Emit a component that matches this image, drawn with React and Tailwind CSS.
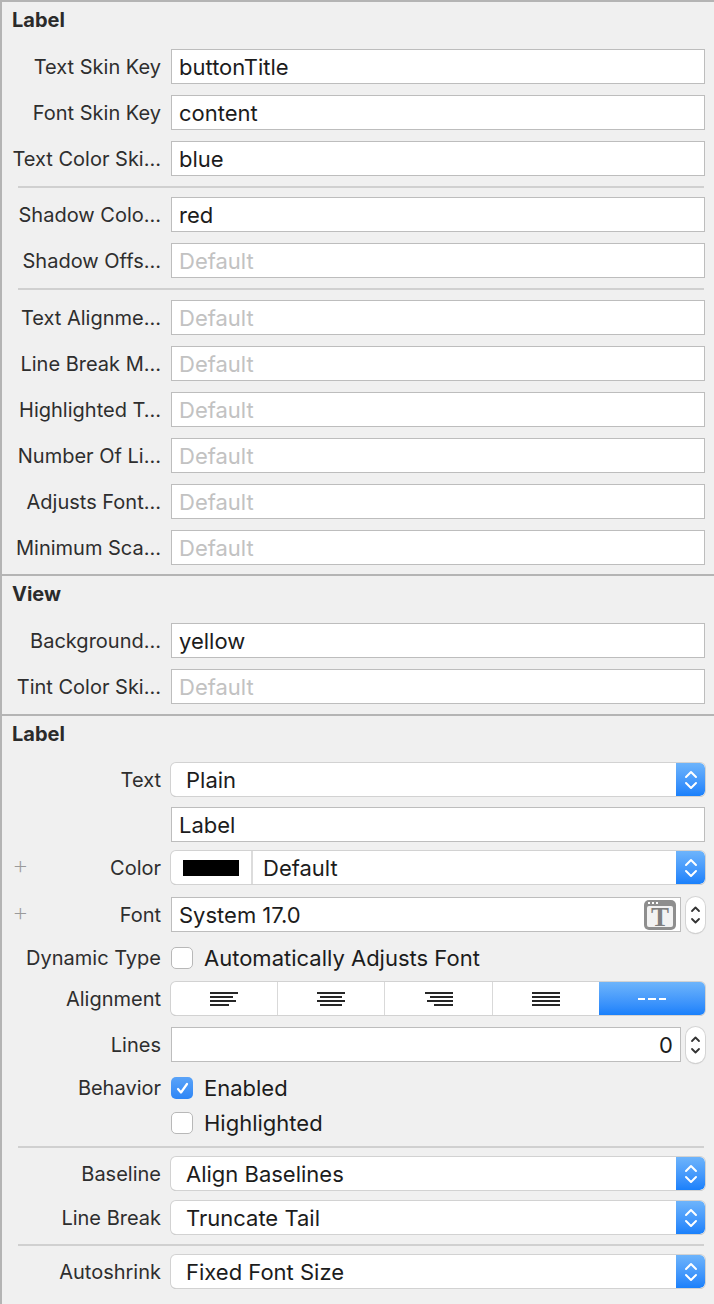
import React from 'react';

// Inspector panel - Label / View / Label attributes

const FONT = { fontFamily: 'Inter, "Liberation Sans", sans-serif' };

const Header = ({ title, className = '' }) => (
    <div className={`h-[24px] leading-[24px] pl-[10px] text-[20px] font-bold text-[#2b2b2b] ${className}`}>
        {title}
    </div>
);

const Row = ({ label, className = '', children, plus = false }) => (
    <div className={`flex items-center ${className}`}>
        <div className="relative w-[159px] shrink-0 text-right text-[20px] leading-[24px] text-[#2e2e2e] whitespace-nowrap">
            {plus && <span className="absolute left-[10px] top-[-3px] text-[26px] font-extralight text-[#9a9a9a]">+</span>}
            {label}
        </div>
        <div className="ml-[10px] mr-[9px] flex flex-1 items-center">{children}</div>
    </div>
);

const Field = ({ value, placeholder = 'Default', className = '', children }) => (
    <div className={`h-[35px] flex-1 flex items-center border border-[#bdbdbd] bg-white px-[7px] text-[22px] ${className}`}>
        {value ? (
            <span className="text-[#1c1c1c]">{value}</span>
        ) : (
            <span className="text-[#c2c2c2]">{placeholder}</span>
        )}
        {children}
    </div>
);

const Separator = ({ className = '' }) => (
    <div className={`ml-[16px] mr-[10px] h-[2px] bg-[#d0d0d0] ${className}`} />
);

const SectionBorder = () => <div className="h-[2px] bg-[#b4b4b4]" />;

const UpDown = ({ color = 'white' }) => (
    <svg width="14" height="20" viewBox="0 0 14 20" fill="none" stroke={color} strokeWidth="2" strokeLinecap="round" strokeLinejoin="round">
        <path d="M2 7 L7 2 L12 7" />
        <path d="M2 13 L7 18 L12 13" />
    </svg>
);

const PopupArrow = () => (
    <div className="flex h-full w-[29px] shrink-0 items-center justify-center rounded-r-[5px] bg-gradient-to-b from-[#6db4fb] to-[#1980fb]">
        <UpDown />
    </div>
);

const Popup = ({ value, className = '' }) => (
    <div className={`flex h-[33px] flex-1 items-center overflow-hidden rounded-[5px] bg-white shadow-[0_0_0_1px_#d2d2d2,0_1px_0_0_#b0b0b0] ${className}`}>
        <span className="flex-1 pl-[15px] text-[22px] text-[#1c1c1c]">{value}</span>
        <PopupArrow />
    </div>
);

const Stepper = () => (
    <div className="ml-[5px] flex h-[36px] w-[19px] shrink-0 items-center justify-center rounded-full bg-white shadow-[0_0_0_1px_#d4d4d4,0_1px_1px_0_#b5b5b5]">
        <svg width="11" height="22" viewBox="0 0 11 22" fill="none" stroke="#333" strokeWidth="1.8" strokeLinecap="round" strokeLinejoin="round">
            <path d="M2 7 L5.5 3.5 L9 7" />
            <path d="M2 15 L5.5 18.5 L9 15" />
        </svg>
    </div>
);

const Checkbox = ({ checked = false }) => (
    checked ? (
        <div className="flex h-[22px] w-[22px] shrink-0 items-center justify-center rounded-[5px] bg-gradient-to-b from-[#5aa3f8] to-[#2d86f6]">
            <svg width="15" height="15" viewBox="0 0 15 15" fill="none" stroke="white" strokeWidth="2.2" strokeLinecap="round" strokeLinejoin="round">
                <path d="M3 8 L6 11.5 L12 3" />
            </svg>
        </div>
    ) : (
        <div className="h-[22px] w-[22px] shrink-0 rounded-[5px] border border-[#b8b8b8] bg-white" />
    )
);

const CheckRow = ({ label, text, checked, className = '' }) => (
    <Row label={label} className={`h-[22px] ${className}`}>
        <div className="flex items-center gap-[11px]">
            <Checkbox checked={checked} />
            <span className="text-[22px] text-[#1c1c1c]">{text}</span>
        </div>
    </Row>
);

// alignment glyph: four bars; offsets give left / center / right / justified
const AlignIcon = ({ bars }) => (
    <svg width="30" height="16" viewBox="0 0 30 16">
        {bars.map(([x, w], i) => (
            <rect key={i} x={x} y={1 + i * 4} width={w} height="2" fill="#262626" />
        ))}
    </svg>
);

const alignOptions = [
    [[1, 28], [1, 23], [1, 26], [1, 19]],
    [[1, 28], [4, 22], [1, 28], [4, 22]],
    [[1, 28], [6, 23], [3, 26], [10, 19]],
    [[1, 28], [1, 28], [1, 28], [1, 28]],
];

const AlignmentControl = () => (
    <div className="flex h-[33px] flex-1 overflow-hidden rounded-[5px] bg-white shadow-[0_0_0_1px_#d2d2d2,0_1px_0_0_#b0b0b0]">
        {alignOptions.map((bars, i) => (
            <div key={i} className={`flex flex-1 items-center justify-center ${i > 0 ? 'border-l border-[#d9d9d9]' : ''}`}>
                <AlignIcon bars={bars} />
            </div>
        ))}
        <div className="flex flex-1 items-center justify-center bg-gradient-to-b from-[#6db4fb] to-[#1980fb]">
            <svg width="30" height="4" viewBox="0 0 30 4">
                <rect x="1" y="1" width="7" height="2" fill="white" />
                <rect x="11" y="1" width="8" height="2" fill="white" />
                <rect x="22" y="1" width="7" height="2" fill="white" />
            </svg>
        </div>
    </div>
);

const FontButton = () => (
    <div className="relative ml-auto flex h-[30px] w-[32px] items-end justify-center rounded-[5px] bg-[#8e8e8e] pb-[3px]">
        <div className="absolute left-[4px] top-[2px] flex gap-[2px]">
            <span className="h-[2px] w-[2px] bg-white" />
            <span className="h-[2px] w-[2px] bg-white" />
            <span className="h-[2px] w-[2px] bg-white" />
        </div>
        <div className="flex h-[21px] w-[26px] items-center justify-center rounded-[2px] bg-[#f2f2f2]">
            <span className="mt-[2px] text-[27px] font-bold leading-none text-[#7f7f7f]" style={{ fontFamily: '"Liberation Serif", serif' }}>T</span>
        </div>
    </div>
);

const skinRows1 = [
    { label: 'Text Skin Key', value: 'buttonTitle' },
    { label: 'Font Skin Key', value: 'content' },
    { label: 'Text Color Ski…', value: 'blue' },
];

const skinRows2 = [
    { label: 'Shadow Colo…', value: 'red' },
    { label: 'Shadow Offs…' },
];

const skinRows3 = [
    'Text Alignme…',
    'Line Break M…',
    'Highlighted T…',
    'Number Of Li…',
    'Adjusts Font…',
    'Minimum Sca…',
];

const App = () => {
    return (
        <div className="h-[1304px] w-[714px] overflow-hidden border-l-2 border-t-2 border-[#b4b4b4] bg-[#f0f0f0] leading-[24px]" style={FONT}>
            {/* Skin section */}
            <Header title="Label" className="mt-[6px]" />
            <div className="mt-[17px] flex flex-col gap-[11px]">
                {skinRows1.map((r) => (
                    <Row key={r.label} label={r.label} className="h-[35px]"><Field value={r.value} /></Row>
                ))}
            </div>
            <Separator className="mt-[10px] mb-[9px]" />
            <div className="flex flex-col gap-[11px]">
                {skinRows2.map((r) => (
                    <Row key={r.label} label={r.label} className="h-[35px]"><Field value={r.value} /></Row>
                ))}
            </div>
            <Separator className="mt-[10px] mb-[10px]" />
            <div className="flex flex-col gap-[11px]">
                {skinRows3.map((label) => (
                    <Row key={label} label={label} className="h-[35px]"><Field /></Row>
                ))}
            </div>

            <div className="mt-[9px]"><SectionBorder /></div>

            {/* View section */}
            <Header title="View" className="mt-[6px]" />
            <div className="mt-[17px] flex flex-col gap-[11px]">
                <Row label="Background…" className="h-[35px]"><Field value="yellow" /></Row>
                <Row label="Tint Color Ski…" className="h-[35px]"><Field /></Row>
            </div>

            <div className="mt-[10px]"><SectionBorder /></div>

            {/* Label attributes */}
            <Header title="Label" className="mt-[6px]" />
            <Row label="Text" className="mt-[17px] h-[33px]"><Popup value="Plain" /></Row>
            <Row label="" className="mt-[11px] h-[35px]"><Field value="Label" /></Row>
            <Row label="Color" plus className="mt-[9px] h-[33px]">
                <div className="flex h-[33px] flex-1 items-center overflow-hidden rounded-[5px] bg-white shadow-[0_0_0_1px_#d2d2d2,0_1px_0_0_#b0b0b0]">
                    <div className="flex h-full w-[82px] items-center justify-center border-r-2 border-[#dcdcdc]">
                        <div className="h-[16px] w-[56px] bg-black" />
                    </div>
                    <span className="flex-1 pl-[10px] text-[22px] text-[#1c1c1c]">Default</span>
                    <PopupArrow />
                </div>
            </Row>
            <Row label="Font" plus className="mt-[13px] h-[35px]">
                <Field value="System 17.0" className="pr-[4px]"><FontButton /></Field>
                <Stepper />
            </Row>
            <CheckRow label="Dynamic Type" text="Automatically Adjusts Font" className="mt-[15px]" />
            <Row label="Alignment" className="mt-[13px] h-[33px]"><AlignmentControl /></Row>
            <Row label="Lines" className="mt-[12px] h-[35px]">
                <div className="flex h-[35px] flex-1 items-center justify-end border border-[#bdbdbd] bg-white px-[7px] text-[22px] text-[#1c1c1c]">0</div>
                <Stepper />
            </Row>
            <CheckRow label="Behavior" text="Enabled" checked className="mt-[15px]" />
            <CheckRow label="" text="Highlighted" className="mt-[13px]" />

            <Separator className="mt-[12px] mb-[9px]" />
            <Row label="Baseline" className="h-[33px]"><Popup value="Align Baselines" /></Row>
            <Row label="Line Break" className="mt-[11px] h-[33px]"><Popup value="Truncate Tail" /></Row>
            <Separator className="mt-[10px] mb-[9px]" />
            <Row label="Autoshrink" className="h-[33px]"><Popup value="Fixed Font Size" /></Row>
        </div>
    );
};

export default App;
